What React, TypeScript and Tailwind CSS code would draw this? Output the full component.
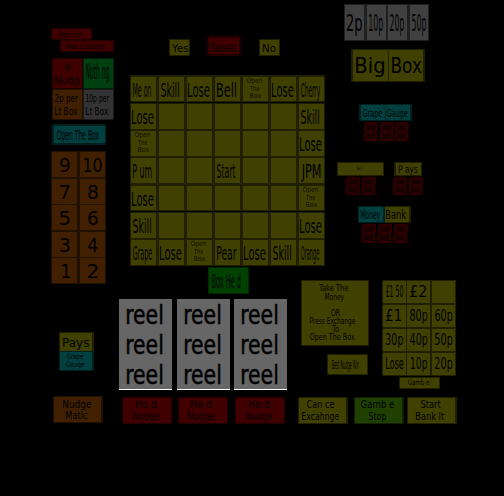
import { useLayoutEffect, useRef, type ReactNode } from "react";

/** One line of text, squeezed horizontally so its ink fills the width given in `c`. */
function T({ c, children }: { c: string; children: string }) {
  const box = useRef<HTMLDivElement>(null);
  const ink = useRef<HTMLSpanElement>(null);
  useLayoutEffect(() => {
    const b = box.current;
    const s = ink.current;
    const ctx = document.createElement("canvas").getContext("2d");
    if (!b || !s || !ctx) return;
    ctx.font = '100px "DejaVu Sans"';
    const m = ctx.measureText(children);
    const size = parseFloat(getComputedStyle(b).fontSize) / 100;
    const left = -m.actualBoundingBoxLeft * size;
    const width = (m.actualBoundingBoxRight + m.actualBoundingBoxLeft) * size;
    const k = b.getBoundingClientRect().width / width;
    s.style.transform = `translateX(${-left * k}px) scaleX(${k})`;
  }, [children]);
  return (
    <div ref={box} className={`shrink-0 leading-none ${c}`}>
      <span ref={ink} className="block w-max origin-left whitespace-pre">{children}</span>
    </div>
  );
}

const OLIVE = "bg-[#404000] border-[#202000]";
const RED = "bg-[#400000] border-[#200000]";
const TEAL = "bg-[#004040] border-[#002020]";
const BROWN = "bg-[#402000] border-[#201000]";

function Panel({ c, children }: { c: string; children?: ReactNode }) {
  return <div className={`flex shrink-0 flex-col items-start ${c}`}>{children}</div>;
}

const words: Record<string, string> = {
  Skill: "ml-[2px] w-[18px]",
  Lose: "ml-[0.5px] w-[21.5px]",
  "Me on": "ml-[2px] w-[18px]",
  Bell: "ml-[2px] w-[19px]",
  Cherry: "ml-[2px] w-[19px]",
  "P um": "ml-[1.5px] w-[18.5px]",
  Start: "ml-[2px] w-[18.5px]",
  JPM: "ml-[2px] w-[19.5px]",
  Grape: "ml-[2px] w-[19px]",
  Pear: "ml-[1.5px] w-[19.5px]",
  Orange: "ml-[2px] w-[18px]",
};

function Cell({ text, h }: { text: string; h: string }) {
  return (
    <div className={`w-[25px] shrink-0 bg-[#404000] ${h}`}>
      {text === "Box" ? (
        <div className="pt-[1px] text-[7px] text-black/80">
          <T c="ml-[3.5px] w-[15px] h-[7.5px]">Open</T>
          <T c="ml-[7px] w-[9px] h-[7.5px]">The</T>
          <T c="ml-[6.5px] w-[11px] h-[7.5px]">Box</T>
        </div>
      ) : text ? (
        <div className="pt-[4px] text-[19px]">
          <T c={words[text]}>{text}</T>
        </div>
      ) : null}
    </div>
  );
}

function Row({ cells, h = "h-[25px]" }: { cells: string[]; h?: string }) {
  return (
    <div className="flex gap-[3px]">
      {cells.map((t, i) => <Cell key={i} text={t} h={h} />)}
    </div>
  );
}

function Digits({ n, c }: { n: number; c: string }) {
  return (
    <div className={`flex shrink-0 ${c}`}>
      {Array.from({ length: n }, (_, i) => (
        <svg key={i} viewBox="0 0 16 21" preserveAspectRatio="none" className="h-full min-w-0 flex-1">
          <path d="M1.6 .8H15L14.2 20H.6Z" fill="#180000" />
          <path
            d="M3 2.2H13.6M2.4 3.2L2 9.6M14 3.2L13.6 9.6M3 10.6H13M1.9 11.6L1.5 18M13.5 11.6L13 18M2.2 19H12.6M14.2 19.4H15.6"
            fill="none"
            stroke="#360000"
            strokeWidth="2"
          />
        </svg>
      ))}
    </div>
  );
}

function Num({ t, one }: { t: string; one?: string }) {
  return (
    <div className="h-[25px] w-[25px] bg-[#402000] pt-[3px] text-[20px]">
      <T c={one ?? "ml-[8px] w-[9.5px]"}>{t}</T>
    </div>
  );
}

function Prize({ t, c }: { t?: string; c?: string }) {
  return (
    <div className="h-[22px] w-[23px] bg-[#404000] pt-[3px] text-[16px]">
      {t && <T c={c ?? ""}>{t}</T>}
    </div>
  );
}

function Reel() {
  return (
    <div className="h-[91px] w-[53px] border-b border-white bg-[#666] pt-[3px] text-[26px] [-webkit-text-stroke:0.5px_black]">
      <T c="ml-[7.5px] w-[35px] h-[30px]">reel</T>
      <T c="ml-[7.5px] w-[35px] h-[30px]">reel</T>
      <T c="ml-[7.5px] w-[35px] h-[26px]">reel</T>
    </div>
  );
}

function Hold({ c }: { c: string }) {
  return (
    <Panel c={`mt-px h-[27px] w-[50px] border ${RED} ${c}`}>
      <T c="mt-[1px] ml-[12.5px] w-[20px] text-[11px]">Ho d</T>
      <T c="mt-[1.5px] ml-[9.5px] w-[26px] text-[10px]">Nudge</T>
    </Panel>
  );
}

export default function App() {
  return (
    <div className="flex h-[496px] w-[504px] flex-col overflow-hidden bg-black font-['DejaVu_Sans',sans-serif] text-black">
      <div className="flex h-[280px] shrink-0 items-start">
        {/* nudge and box awards */}
        <div className="ml-[51px] w-[64px] shrink-0 pt-[28px]">
          <Panel c={`h-[12px] w-[41px] border ${RED}`}>
            <T c="mt-[2px] ml-[7px] w-[22px] text-[7.5px]">Each Lt</T>
          </Panel>
          <Panel c={`ml-[9px] h-[12px] w-[54px] border ${RED}`}>
            <T c="mt-[2px] ml-[6px] w-[37.5px] text-[7.5px]">Box Contans</T>
          </Panel>
          <div className="mt-[6px] ml-px grid w-[62px] grid-cols-[31px_31px] grid-rows-[31px_31px]">
            <Panel c={`border ${RED}`}>
              <T c="mt-[3px] ml-[12px] w-[5.5px] h-[13px] text-[11px]">4</T>
              <T c="ml-[1.5px] w-[24px] text-[11px]">Nudg</T>
            </Panel>
            <Panel c="border border-[#002008] bg-[#004010]">
              <T c="mt-[3px] ml-[2px] w-[23px] text-[21px]">Noth ng</T>
            </Panel>
            <Panel c={`border ${BROWN}`}>
              <T c="mt-[3px] ml-[2px] w-[23px] h-[13px] text-[11px]">2p per</T>
              <T c="ml-[2px] w-[22px] text-[11px]">Lt Box</T>
            </Panel>
            <Panel c="border border-[#1a1a1a] bg-[#333]">
              <T c="mt-[3px] ml-[2px] w-[23px] h-[13px] text-[11px]">10p per</T>
              <T c="ml-[2px] w-[22px] text-[11px]">Lt Box</T>
            </Panel>
          </div>
          <Panel c={`mt-[4px] ml-px h-[21px] w-[54px] border-2 border-r ${TEAL}`}>
            <T c="mt-[2px] ml-[3px] w-[42px] text-[14px]">Open The Box</T>
          </Panel>
          <div className="mt-[6px] grid h-[133px] w-[55px] grid-cols-[25px_25px] content-between gap-x-[3px] bg-[#201000] p-px">
            <Num t="9" /><Num t="10" one="ml-[4px] w-[17.5px]" />
            <Num t="7" /><Num t="8" />
            <Num t="5" /><Num t="6" />
            <Num t="3" /><Num t="4" />
            <Num t="1" one="ml-[10px] w-[8px]" /><Num t="2" />
          </div>
        </div>

        {/* board */}
        <div className="ml-[15px] w-[195px] shrink-0 pt-[36px]">
          <div className="flex h-[39px] items-start">
            <Panel c={`mt-[3px] ml-[39px] h-[17px] w-[21px] border ${OLIVE}`}>
              <T c="mt-[3px] ml-[2px] w-[16px] text-[11px]">Yes</T>
            </Panel>
            <Panel c={`ml-[17px] h-[20px] w-[34px] border-2 ${RED}`}>
              <T c="mt-[3px] ml-[2px] w-[25px] text-[13px]">Repeat</T>
            </Panel>
            <Panel c={`mt-[3px] ml-[18px] h-[17px] w-[21px] border ${OLIVE}`}>
              <T c="mt-[3px] ml-[3px] w-[12.5px] text-[11px]">No</T>
            </Panel>
          </div>
          <div className="bg-[#202000] px-px pt-[2px] pb-px">
            <Row h="h-[24px]" cells={["Me on", "Skill", "Lose", "Bell", "Box", "Lose", "Cherry"]} />
          </div>
          <div className="mt-px flex flex-col gap-[2px] bg-[#202000] p-px">
            <Row cells={["Lose", "", "", "", "", "", "Skill"]} />
            <Row cells={["Box", "", "", "", "", "", "Lose"]} />
            <Row cells={["P um", "", "", "Start", "", "", "JPM"]} />
            <div className="pt-px">
              <Row h="h-[24px]" cells={["Lose", "", "", "", "", "", "Box"]} />
            </div>
          </div>
          <div className="mt-px flex flex-col gap-[2px] bg-[#202000] p-px">
            <Row cells={["Skill", "", "", "", "", "", "Lose"]} />
            <Row cells={["Grape", "Lose", "Box", "Pear", "Lose", "Skill", "Orange"]} />
          </div>
          <Panel c="mt-px ml-[78px] h-[27px] w-[41px] border border-[#002800] bg-[#004000]">
            <T c="mt-[4px] ml-[3px] w-[28.5px] text-[19px]">Box He d</T>
          </Panel>
        </div>

        {/* coin values and meters */}
        <div className="ml-[12px] w-[92px] shrink-0 pt-[4px]">
          <div className="ml-[7px] flex h-[37px] w-[85px] gap-[2px] bg-[#202020] p-px text-[23px]">
            <Panel c="w-[19px] bg-[#404040]"><T c="mt-[7px] ml-[2px] w-[15px]">2p</T></Panel>
            <Panel c="ml-px w-[19px] bg-[#404040]"><T c="mt-[7px] ml-[2px] w-[14px]">10p</T></Panel>
            <Panel c="w-[19px] bg-[#404040]"><T c="mt-[7px] ml-[2px] w-[14px]">20p</T></Panel>
            <Panel c="ml-px w-[18px] bg-[#404040]"><T c="mt-[7px] ml-[2px] w-[14px]">50p</T></Panel>
          </div>
          <div className="mt-[8px] ml-[14px] flex h-[33px] w-[74px] gap-px border-x-2 border-y border-[#202000] bg-[#202000] text-[21px]">
            <Panel c="w-[35px] bg-[#404000]"><T c="mt-[6px] ml-[3px] w-[28px]">Big</T></Panel>
            <Panel c="w-[34px] bg-[#404000]"><T c="mt-[6px] ml-[2.5px] w-[29.5px]">Box</T></Panel>
          </div>
          <div className="mt-[22px] ml-[22px] flex h-[17px] w-[53px] gap-px border-x-2 border-y border-[#002020] bg-[#002020] text-[11px]">
            <Panel c="w-[24px] bg-[#004040]"><T c="mt-[3px] ml-[2px] w-[19px]">Grape</T></Panel>
            <Panel c="w-[24px] bg-[#004040]"><T c="mt-[3px] ml-[1px] w-[20.5px]">Gauge</T></Panel>
          </div>
          <Digits n={3} c="ml-[26px] h-[21px] w-[47px]" />
          <div className="mt-[20px] flex">
            <Panel c={`h-[14px] w-[47px] border ${OLIVE}`}>
              <T c="mt-[4px] ml-[19px] w-[5px] text-[4px]">No 1</T>
            </Panel>
            <Panel c={`ml-[10px] h-[14px] w-[28px] border border-l-2 ${OLIVE}`}>
              <T c="mt-[2px] ml-[3px] w-[18.5px] text-[10px]">P ays</T>
            </Panel>
          </div>
          <div className="flex">
            <Digits n={2} c="ml-[8px] h-[20px] w-[32px]" />
            <Digits n={2} c="ml-[15px] h-[20px] w-[32px]" />
          </div>
          <div className="mt-[10px] ml-[21px] flex h-[17px] w-[53px] text-[12px]">
            <Panel c={`w-[27px] border border-r-2 ${TEAL}`}><T c="mt-[2px] ml-[2px] w-[19px]">Money</T></Panel>
            <Panel c={`w-[26px] border border-l-0 border-r-2 ${OLIVE}`}><T c="mt-[2px] ml-[1px] w-[20px]">Bank</T></Panel>
          </div>
          <Digits n={3} c="ml-[24px] h-[21px] w-[48px]" />
        </div>
      </div>

      {/* reels and gamble ladder */}
      <div className="flex h-[116px] shrink-0 items-start">
        <div className="mt-[52px] ml-[59px] flex w-[35px] shrink-0 flex-col">
          <Panel c={`h-[19px] border border-r-2 border-b-0 ${OLIVE}`}>
            <T c="mt-[3px] ml-[2.5px] w-[26px] text-[13px]">Pays</T>
          </Panel>
          <Panel c={`h-[20px] border border-r-2 ${TEAL}`}>
            <T c="mt-[1px] ml-[7px] w-[16px] h-[8px] text-[7.5px]">Grape</T>
            <T c="ml-[6px] w-[18px] text-[7.5px]">Gauge</T>
          </Panel>
        </div>
        <div className="mt-[19px] ml-[25px] flex w-[168px] shrink-0">
          <Reel />
          <div className="w-[5px]" />
          <Reel />
          <div className="w-[4px]" />
          <Reel />
        </div>
        <div className="ml-[14px] w-[68px] shrink-0">
          <Panel c={`h-[66px] border ${OLIVE} text-[8px]`}>
            <T c="mt-[4px] ml-[17px] w-[29px] h-[9px]">Take The</T>
            <T c="ml-[23px] w-[19px] h-[16px]">Money</T>
            <T c="ml-[29px] w-[9px] h-[8px]">OR</T>
            <T c="ml-[8px] w-[45px] h-[8px]">Press Exchange</T>
            <T c="ml-[29.5px] w-[7px] h-[8px]">To</T>
            <T c="ml-[8px] w-[44.5px]">Open The Box</T>
          </Panel>
          <Panel c={`mt-[8px] ml-[26px] h-[21px] w-[41px] border ${OLIVE}`}>
            <T c="mt-[3px] ml-[4px] w-[27px] text-[13px]">Best Nudge Win</T>
          </Panel>
        </div>
        <div className="ml-[13px] w-[74px] shrink-0">
          <div className="grid h-[96px] grid-cols-[22px_23px_23px] grid-rows-[22px_22px_22px_22px] gap-x-[2px] gap-y-[2px] bg-[#202000] px-px pt-px">
            <Prize t="£1 50" c="ml-[3px] w-[17px]" />
            <Prize t="£2" c="ml-[3px] w-[16px]" />
            <Prize />
            <Prize t="£1" c="ml-[3px] w-[15px]" />
            <Prize t="80p" c="ml-[2.5px] w-[17.5px]" />
            <Prize t="60p" c="ml-[2.5px] w-[17.5px]" />
            <Prize t="30p" c="ml-[3px] w-[17px]" />
            <Prize t="40p" c="ml-[2.5px] w-[17.5px]" />
            <Prize t="50p" c="ml-[2.5px] w-[17.5px]" />
            <Prize t="Lose" c="ml-[3px] w-[17.5px]" />
            <Prize t="10p" c="ml-[4px] w-[16px]" />
            <Prize t="20p" c="ml-[2.5px] w-[17.5px]" />
          </div>
          <Panel c={`mt-px ml-[17px] h-[12px] w-[41px] border ${OLIVE}`}>
            <T c="mt-[1px] ml-[8px] w-[21px] text-[7.5px]">Gamb e</T>
          </Panel>
        </div>
      </div>

      {/* player buttons */}
      <div className="flex h-[28px] shrink-0 items-start">
        <Panel c={`ml-[53px] h-[27px] w-[50px] border border-r-2 ${BROWN}`}>
          <T c="mt-[2px] ml-[9px] w-[28px] text-[11px]">Nudge</T>
          <T c="mt-px ml-[12px] w-[21px] text-[10px]">Matic</T>
        </Panel>
        <Hold c="ml-[19px]" />
        <Hold c="ml-[5.5px]" />
        <Hold c="ml-[7.5px]" />
        <Panel c={`mt-px ml-[13px] h-[27px] w-[50px] border border-r-2 ${OLIVE}`}>
          <T c="mt-[1px] ml-[8px] w-[27px] text-[11px]">Can ce</T>
          <T c="mt-[1.5px] ml-[3px] w-[37px] text-[10px]">Excahnge</T>
        </Panel>
        <Panel c="mt-px ml-[6px] h-[27px] w-[50px] border border-r-2 border-[#102000] bg-[#204000]">
          <T c="mt-[1px] ml-[6px] w-[33px] text-[11px]">Gamb e</T>
          <T c="mt-[1.5px] ml-[14px] w-[17px] text-[10px]">Stop</T>
        </Panel>
        <Panel c={`mt-px ml-[3px] h-[27px] w-[50px] border border-r-2 ${OLIVE}`}>
          <T c="mt-[1px] ml-[12.5px] w-[19.5px] text-[11px]">Start</T>
          <T c="mt-[1.5px] ml-[7.5px] w-[28px] text-[10px]">Bank It</T>
        </Panel>
      </div>
    </div>
  );
}
